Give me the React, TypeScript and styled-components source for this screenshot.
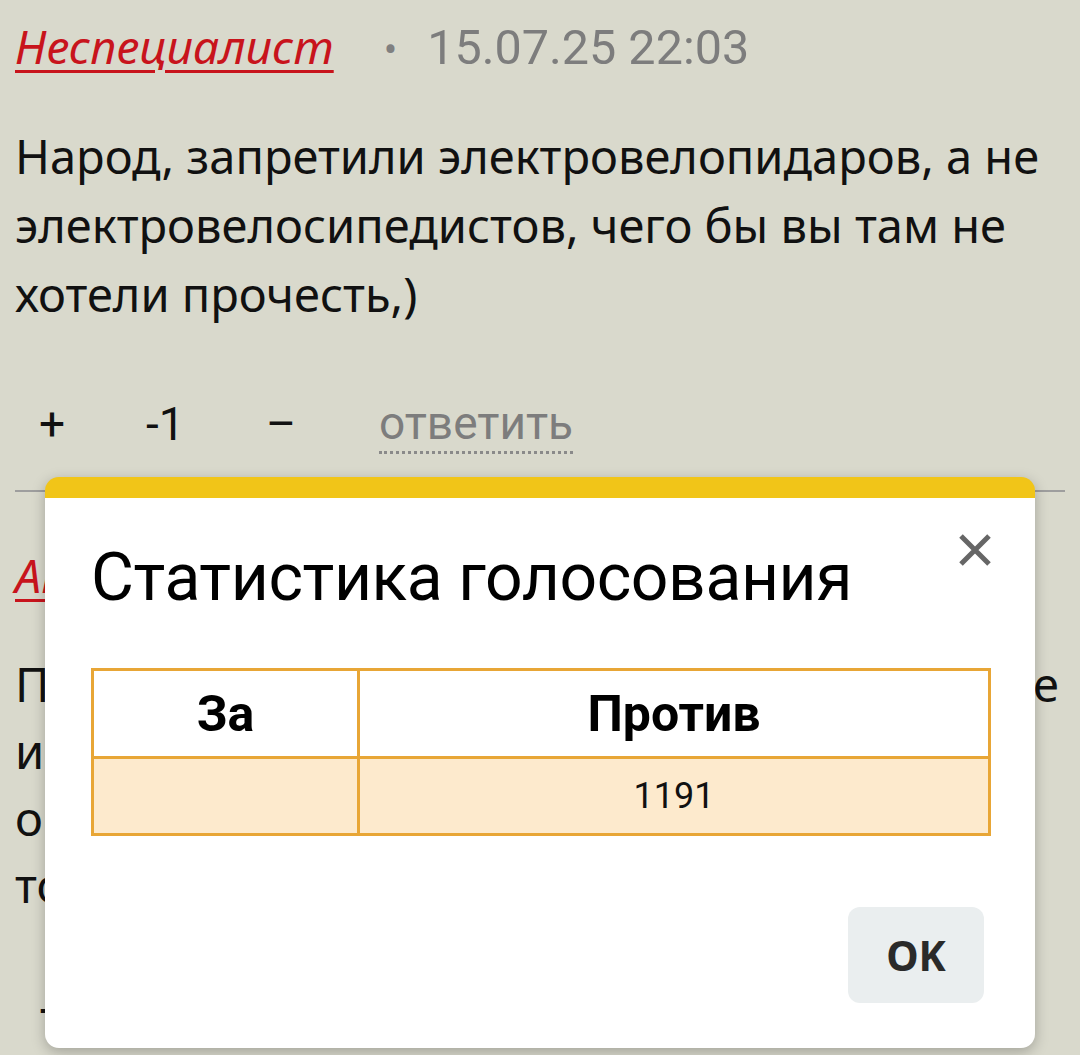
import React from "react";
import styled, { createGlobalStyle } from "styled-components";

const Global = createGlobalStyle`
  html, body { margin: 0; padding: 0; }
  body {
    background: #d9d9cc;
    width: 1080px;
    height: 1055px;
    overflow: hidden;
    font-family: "Noto Sans", sans-serif;
  }
`;

const Page = styled.div`
  position: relative;
  width: 1080px;
  height: 1055px;
  overflow: hidden;
  background: #d9d9cc;
`;

const Feed = styled.div`
  display: flex;
  flex-direction: column;
  padding: 0 15px;
`;

const Comment = styled.article`
  display: flex;
  flex-direction: column;
`;

const Header = styled.div`
  display: flex;
  align-items: baseline;
  height: 96px;
  padding-top: 14px;
  box-sizing: border-box;
`;

const Author = styled.a`
  font-family: "Noto Sans", sans-serif;
  font-style: italic;
  font-size: 46.5px;
  color: #c8141c;
  text-decoration: underline;
  text-decoration-thickness: 3px;
  text-underline-offset: 6px;
`;

const Dot = styled.span`
  font-family: Roboto, sans-serif;
  font-size: 40px;
  color: #808080;
  margin-left: 50px;
`;

const Stamp = styled.span`
  font-family: Roboto, sans-serif;
  font-size: 48.5px;
  color: #7d7d7d;
  margin-left: 30px;
`;

const Body = styled.div<{ $lh: number }>`
  font-family: "Noto Sans", sans-serif;
  font-size: 47px;
  line-height: ${(p) => p.$lh}px;
  color: #111;
  padding-top: 26px;
`;

const Line = styled.span<{ $justify?: boolean }>`
  display: block;
  white-space: nowrap;
  text-align: ${(p) => (p.$justify ? "justify" : "left")};
  text-align-last: ${(p) => (p.$justify ? "justify" : "auto")};
  padding-right: ${(p) => (p.$justify ? "6px" : "0")};
`;

const Actions = styled.div<{ $top: number }>`
  display: flex;
  align-items: center;
  height: 92px;
  margin-top: ${(p) => p.$top}px;
  padding-left: 24px;
  font-family: Roboto, sans-serif;
  font-size: 46px;
  color: #111;
`;

const VoteBtn = styled.span<{ $w: number }>`
  width: ${(p) => p.$w}px;
`;

const Reply = styled.span`
  color: #7d7d7d;
  border-bottom: 3px dotted #8a8a8a;
  line-height: 52px;
  padding-bottom: 2px;
  margin-top: 2px;
  margin-left: 10px;
`;

const Separator = styled.hr`
  margin: 20px 0 37px;
  border: none;
  height: 2px;
  background: #9e9e9e;
`;

const Modal = styled.div`
  position: absolute;
  left: 45px;
  top: 477px;
  width: 990px;
  height: 571px;
  background: #fff;
  border-radius: 14px;
  overflow: hidden;
  border-top: 21px solid #f1c518;
  box-sizing: border-box;
  box-shadow: 0 4px 14px rgba(0, 0, 0, 0.25);
  display: flex;
  flex-direction: column;
  padding: 0 46px;
`;

const ModalHead = styled.div`
  display: flex;
  justify-content: space-between;
  align-items: flex-start;
  height: 170px;
`;

const Title = styled.h2`
  margin: 0;
  padding-top: 41px;
  font-family: Roboto, sans-serif;
  font-weight: 400;
  font-size: 66px;
  color: #000;
  letter-spacing: -0.4px;
`;

const Close = styled.button`
  border: none;
  background: none;
  padding: 0;
  margin-top: 34px;
  margin-right: -4px;
  width: 36px;
  height: 36px;
  display: flex;
  align-items: center;
  justify-content: center;
`;

const Table = styled.table`
  width: 900px;
  border-collapse: collapse;
  font-family: Roboto, sans-serif;
`;

const Th = styled.th<{ $w?: number }>`
  border: 3px solid #e8a636;
  height: 85px;
  padding: 0;
  font-size: 50px;
  font-weight: 700;
  color: #000;
  width: ${(p) => (p.$w ? `${p.$w}px` : "auto")};
`;

const Td = styled.td`
  border: 3px solid #e8a636;
  background: #fdeacd;
  height: 74px;
  padding: 0;
  font-size: 36px;
  text-align: center;
  color: #111;
`;

const Footer = styled.div`
  display: flex;
  justify-content: flex-end;
  padding-top: 71px;
  margin-right: 5px;
`;

const OkButton = styled.button`
  width: 136px;
  height: 96px;
  border: none;
  border-radius: 12px;
  background: #eaeeef;
  font-family: "Noto Sans", sans-serif;
  font-weight: 700;
  font-size: 41px;
  color: #2a2a2a;
`;

export default function App() {
  return (
    <Page>
      <Global />
      <Feed>
        <Comment>
          <Header>
            <Author>Неспециалист</Author>
            <Dot>•</Dot>
            <Stamp>15.07.25 22:03</Stamp>
          </Header>
          <Body $lh={69}>
            <Line>Народ, запретили электровелопидаров, а не</Line>
            <Line>электровелосипедистов, чего бы вы там не</Line>
            <Line>хотели прочесть,)</Line>
          </Body>
          <Actions $top={49}>
            <VoteBtn $w={107}>+</VoteBtn>
            <VoteBtn $w={120}>-1</VoteBtn>
            <VoteBtn $w={103}>–</VoteBtn>
            <Reply>ответить</Reply>
          </Actions>
          <Separator />
        </Comment>
        <Comment>
          <Header>
            <Author>Аноним</Author>
          </Header>
          <Body $lh={67}>
            <Line $justify>Правильно, пусть ездят по дороге</Line>
            <Line>и никого не трогают, а то уже</Line>
            <Line>они всех достали на дорогах</Line>
            <Line>только мешают</Line>
          </Body>
          <Actions $top={46}>
            <VoteBtn $w={107}>+</VoteBtn>
          </Actions>
        </Comment>
      </Feed>
      <Modal>
        <ModalHead>
          <Title>Статистика голосования</Title>
          <Close aria-label="close">
            <svg width="34" height="34" viewBox="0 0 34 34">
              <path d="M3 3 L31 31 M31 3 L3 31" stroke="#666" strokeWidth="5" />
            </svg>
          </Close>
        </ModalHead>
        <Table>
          <thead>
            <tr>
              <Th $w={263}>За</Th>
              <Th>Против</Th>
            </tr>
          </thead>
          <tbody>
            <tr>
              <Td></Td>
              <Td>1191</Td>
            </tr>
          </tbody>
        </Table>
        <Footer>
          <OkButton>OK</OkButton>
        </Footer>
      </Modal>
    </Page>
  );
}
